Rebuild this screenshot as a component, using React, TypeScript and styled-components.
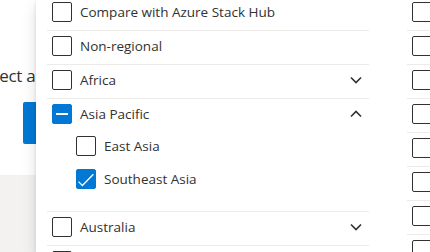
import React from 'react';
import styled, { createGlobalStyle } from 'styled-components';

const textColor = '#323130';
const divider = '#edebe9';
const brand = '#0078d4';

type CheckState = 'off' | 'on' | 'mixed';

interface Region {
    name: string;
    state?: CheckState;
    expandable?: 'down' | 'up';
    children?: Region[];
}

const leftRegions: Region[] = [
    { name: 'Compare with Azure Stack Hub' },
    { name: 'Non-regional' },
    { name: 'Africa', expandable: 'down' },
    {
        name: 'Asia Pacific',
        state: 'mixed',
        expandable: 'up',
        children: [{ name: 'East Asia' }, { name: 'Southeast Asia', state: 'on' }],
    },
    { name: 'Australia', expandable: 'down' },
    { name: 'Brazil', expandable: 'down' },
];

const rightRegions: Region[] = [
    { name: 'Central US' },
    { name: 'East US' },
    { name: 'East US 2' },
    { name: 'North Central US' },
    { name: 'South Central US' },
    { name: 'West Central US' },
    { name: 'West US' },
    { name: 'West US 2' },
];

const GlobalStyle = createGlobalStyle`
    html, body {
        margin: 0;
        padding: 0;
        background: #ffffff;
    }
    body {
        font-family: 'Open Sans', 'Segoe UI', sans-serif;
        color: ${textColor};
        overflow: hidden;
    }
`;

const Page = styled.div`
    position: relative;
    width: 430px;
    height: 252px;
    overflow: hidden;
`;

const Backdrop = styled.div`
    display: flex;
    flex-direction: column;
    height: 100%;
    padding-top: 64px;
    box-sizing: border-box;
`;

const Heading = styled.h2`
    margin: 0 0 0 -23px;
    font-size: 17px;
    line-height: 24px;
    letter-spacing: -0.3px;
    font-weight: 400;
    white-space: nowrap;
`;

const PrimaryButton = styled.div`
    margin: 14px 0 0 23px;
    width: 120px;
    height: 42px;
    border-radius: 2px;
    background: ${brand};
`;

const Band = styled.div`
    flex: 1;
    margin-top: 31px;
    background: #f3f2f1;
`;

const Dropdown = styled.div`
    position: absolute;
    top: 0;
    left: 36px;
    right: 0;
    bottom: 0;
    display: flex;
    gap: 38px;
    padding-left: 11px;
    background: #ffffff;
    box-shadow: 0 6.4px 14.4px rgba(0, 0, 0, 0.13), 0 1.2px 3.6px rgba(0, 0, 0, 0.11);
    overflow: hidden;
`;

const Column = styled.div`
    flex-shrink: 0;
    width: 322px;
    margin-top: -3px;
`;

const Group = styled.div`
    border-bottom: 1px solid ${divider};
`;

const Children = styled.div`
    padding-bottom: 13px;
`;

const Row = styled.div<{ $nested?: boolean; $plain?: boolean }>`
    display: flex;
    align-items: center;
    gap: 8px;
    padding: ${(p) => (p.$nested ? '4px 7px 9px 29px' : '5px 7px 8px 5px')};
    border-bottom: ${(p) => (p.$plain ? 'none' : `1px solid ${divider}`)};
`;

const Label = styled.span`
    flex: 1;
    font-size: 13.5px;
    line-height: 20px;
    white-space: nowrap;
`;

const Box = styled.span<{ $filled: boolean }>`
    display: flex;
    align-items: center;
    justify-content: center;
    flex-shrink: 0;
    width: 20px;
    height: 20px;
    box-sizing: border-box;
    border: 1px solid ${(p) => (p.$filled ? brand : textColor)};
    border-radius: 2px;
    background: ${(p) => (p.$filled ? brand : '#ffffff')};
`;

const Dash = styled.span`
    width: 12px;
    height: 2px;
    background: #ffffff;
`;

const Checkbox = ({ state = 'off' }: { state?: CheckState }) => (
    <Box $filled={state !== 'off'}>
        {state === 'mixed' && <Dash />}
        {state === 'on' && (
            <svg width="20" height="20" viewBox="0 0 20 20" style={{ flexShrink: 0 }}>
                <path d="M2.5 12.6 L6.4 16.5 L17.4 5.3" fill="none" stroke="#ffffff" strokeWidth="1.3" />
            </svg>
        )}
    </Box>
);

const Chevron = ({ dir }: { dir: 'down' | 'up' }) => (
    <svg width="12" height="8" viewBox="0 0 12 8">
        <path
            d={dir === 'down' ? 'M1 1.5 L6 6.5 L11 1.5' : 'M1 6.5 L6 1.5 L11 6.5'}
            fill="none"
            stroke={textColor}
            strokeWidth="1.6"
        />
    </svg>
);

const RegionRow = ({ region, nested, plain }: { region: Region; nested?: boolean; plain?: boolean }) => (
    <Row $nested={nested} $plain={plain || nested}>
        <Checkbox state={region.state} />
        <Label>{region.name}</Label>
        {region.expandable && <Chevron dir={region.expandable} />}
    </Row>
);

const RegionList = ({ regions }: { regions: Region[] }) => (
    <Column>
        {regions.map((r) =>
            r.children ? (
                <Group key={r.name}>
                    <RegionRow region={r} plain />
                    <Children>
                        {r.children.map((c) => (
                            <RegionRow key={c.name} region={c} nested />
                        ))}
                    </Children>
                </Group>
            ) : (
                <RegionRow key={r.name} region={r} />
            )
        )}
    </Column>
);

export default function App() {
    return (
        <>
            <GlobalStyle />
            <Page>
                <Backdrop>
                    <Heading>Select a region</Heading>
                    <PrimaryButton />
                    <Band />
                </Backdrop>
                <Dropdown>
                    <RegionList regions={leftRegions} />
                    <RegionList regions={rightRegions} />
                </Dropdown>
            </Page>
        </>
    );
}
